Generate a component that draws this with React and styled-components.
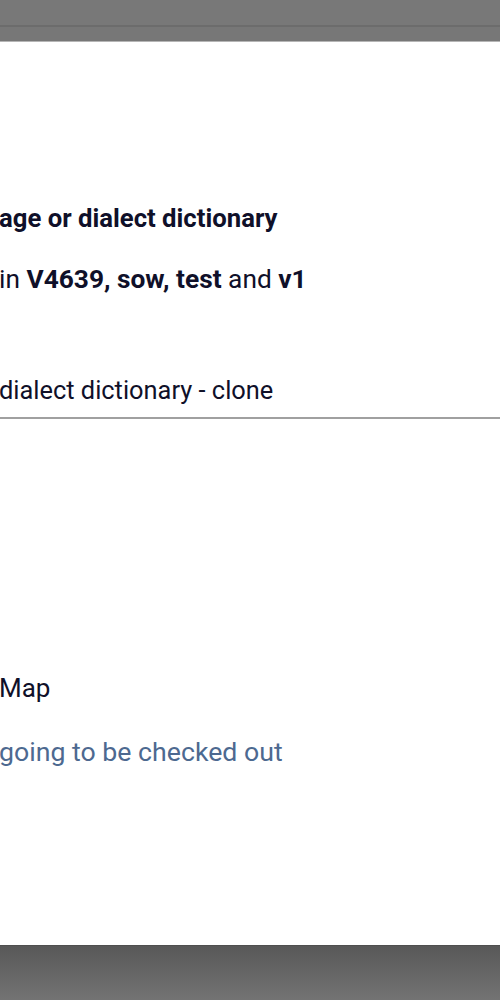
import React from "react";
import styled, { createGlobalStyle } from "styled-components";

const Global = createGlobalStyle`
  html, body { margin: 0; padding: 0; }
  body {
    background: #787878;
    font-family: Roboto, "Noto Sans", "Liberation Sans", sans-serif;
    -webkit-font-smoothing: antialiased;
  }
`;

const Page = styled.div`
  width: 500px;
  height: 1000px;
  display: flex;
  flex-direction: column;
  overflow: hidden;
`;

const TopBar = styled.div`
  height: 25px;
  background: #787878;
  border-bottom: 2px solid #6c6c6c;
`;

const TopGap = styled.div`
  height: 14px;
  background: #777777;
`;

const Dialog = styled.div`
  height: 904px;
  background: #ffffff;
  border-top: 1px solid #b5b5b5;
  display: flex;
  flex-direction: column;
  box-sizing: border-box;
  padding-top: 161px;
  color: #0f1029;
`;

const Text = styled.div`
  margin: ${(p) => p.$gap || 0}px 0 0 -1px;
  font-size: ${(p) => p.$size || 26}px;
  font-weight: ${(p) => (p.$bold ? 700 : 400)};
  line-height: 30px;
  color: ${(p) => p.$color || "#0f1029"};
  white-space: nowrap;
  b { font-weight: 700; }
`;

const Field = styled.div`
  margin-top: 81px;
  border-bottom: 2px solid #a0a0a0;
  padding-bottom: 12px;
`;

const Shade = styled.div`
  flex: 1;
  background: linear-gradient(to bottom, #585858, #737373);
  border-top: 1px solid #4f4f4f;
`;

export default function App() {
  return (
    <Page>
      <Global />
      <TopBar />
      <TopGap />
      <Dialog>
        <Text as="h2" $bold $size={25.7}>age or dialect dictionary</Text>
        <Text as="p" $gap={31} $size={26.3}>
          in <b>V4639, sow, test</b> and <b>v1</b>
        </Text>
        <Field>
          <Text $size={25.4}>dialect dictionary - clone</Text>
        </Field>
        <Text $gap={254} $size={26}>Map</Text>
        <Text $gap={34} $size={26.7} $color="#4d6990">going to be checked out</Text>
      </Dialog>
      <Shade />
    </Page>
  );
}
